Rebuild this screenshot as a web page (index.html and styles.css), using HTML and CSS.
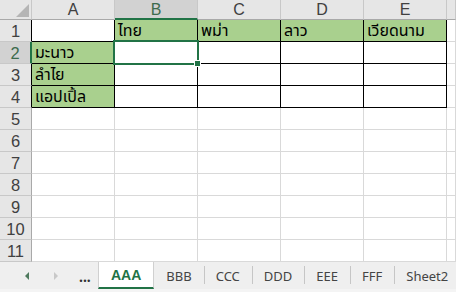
FILE: index.html
```
<!DOCTYPE html>
<html>
<head>
<meta charset="utf-8">
<link rel="stylesheet" href="styles.css">
</head>
<body>
<div class="app">
  <div class="sheet">
    <div class="h corner"><span class="tri"></span></div>
    <div class="h">A</div>
    <div class="h sel-col">B</div>
    <div class="h">C</div>
    <div class="h">D</div>
    <div class="h">E</div>
    <div class="h last"></div>

    <div class="rh rh-bd">1</div>
    <div class="c bd"></div>
    <div class="c bd g">ไทย</div>
    <div class="c bd g">พม่า</div>
    <div class="c bd g">ลาว</div>
    <div class="c bd g">เวียดนาม</div>
    <div class="c"></div>

    <div class="rh rh-bd sel-row">2</div>
    <div class="c bd g">มะนาว</div>
    <div class="c bd active"><span class="selbox"><span class="handle"></span></span></div>
    <div class="c bd"></div>
    <div class="c bd"></div>
    <div class="c bd"></div>
    <div class="c"></div>

    <div class="rh rh-bd">3</div>
    <div class="c bd g">ลำไย</div>
    <div class="c bd"></div>
    <div class="c bd"></div>
    <div class="c bd"></div>
    <div class="c bd"></div>
    <div class="c"></div>

    <div class="rh rh-bd">4</div>
    <div class="c bd g">แอปเปิ้ล</div>
    <div class="c bd"></div>
    <div class="c bd"></div>
    <div class="c bd"></div>
    <div class="c bd"></div>
    <div class="c"></div>

    <div class="rh">5</div><div class="c"></div><div class="c"></div><div class="c"></div><div class="c"></div><div class="c"></div><div class="c"></div>
    <div class="rh">6</div><div class="c"></div><div class="c"></div><div class="c"></div><div class="c"></div><div class="c"></div><div class="c"></div>
    <div class="rh">7</div><div class="c"></div><div class="c"></div><div class="c"></div><div class="c"></div><div class="c"></div><div class="c"></div>
    <div class="rh">8</div><div class="c"></div><div class="c"></div><div class="c"></div><div class="c"></div><div class="c"></div><div class="c"></div>
    <div class="rh">9</div><div class="c"></div><div class="c"></div><div class="c"></div><div class="c"></div><div class="c"></div><div class="c"></div>
    <div class="rh">10</div><div class="c"></div><div class="c"></div><div class="c"></div><div class="c"></div><div class="c"></div><div class="c"></div>
    <div class="rh">11</div><div class="c"></div><div class="c"></div><div class="c"></div><div class="c"></div><div class="c"></div><div class="c"></div>
  </div>

  <div class="tabbar">
    <div class="nav">
      <span class="arrow left"></span>
      <span class="arrow right"></span>
      <span class="dots">...</span>
    </div>
    <div class="tab active-tab">AAA</div>
    <div class="tab">BBB</div>
    <div class="tab">CCC</div>
    <div class="tab">DDD</div>
    <div class="tab">EEE</div>
    <div class="tab">FFF</div>
    <div class="tab">Sheet2</div>
  </div>
</div>
</body>
</html>
```
FILE: styles.css
```
html, body {
  margin: 0;
  padding: 0;
  background: #ffffff;
}
.app {
  width: 456px;
  height: 292px;
  overflow: hidden;
  display: flex;
  flex-direction: column;
}
.sheet {
  display: grid;
  grid-template-columns: 32px repeat(5, 83px) 1fr;
  grid-template-rows: 20px repeat(11, 22px);
  flex: none;
}
.sheet > div {
  box-sizing: border-box;
  border-right: 1px solid #d9d9d9;
  border-bottom: 1px solid #d9d9d9;
  overflow: visible;
  white-space: nowrap;
}
.h {
  background: #e6e6e6;
  border-right-color: #c8c8c8 !important;
  border-bottom-color: #a9a9a9 !important;
  font-family: "Liberation Sans", Arial, sans-serif;
  font-size: 16px;
  color: #404040;
  text-align: center;
  line-height: 19px;
}
.corner {
  position: relative;
}
.tri {
  position: absolute;
  right: 2px;
  bottom: 2px;
  width: 0;
  height: 0;
  border-left: 13px solid transparent;
  border-bottom: 13px solid #b5b5b5;
}
.sel-col {
  background: #d2d2d2;
  color: #3d6b4d;
  border-bottom: 2px solid #217346 !important;
}
.rh {
  background: #e6e6e6;
  border-right-color: #a9a9a9 !important;
  border-bottom-color: #c8c8c8 !important;
  font-family: "Liberation Sans", Arial, sans-serif;
  font-size: 16.5px;
  color: #404040;
  text-align: center;
  line-height: 23px;
}
.rh-bd {
  border-right-color: #000 !important;
}
.sel-row {
  background: #d2d2d2;
  color: #3d6b4d;
  border-right: 2px solid #217346 !important;
}
.c {
  font-family: Tahoma, "Noto Sans Thai", "Leelawadee UI", "Noto Sans", sans-serif;
  font-size: 16px;
  color: #000;
  padding-left: 3px;
  padding-top: 2px;
  line-height: 19px;
}
.bd {
  border-right-color: #000 !important;
  border-bottom-color: #000 !important;
}
.g {
  background: #a9d08e;
}
.active {
  position: relative;
}
.selbox {
  position: absolute;
  left: -2px;
  top: -2px;
  right: -2px;
  bottom: -2px;
  border: 2px solid #217346;
  box-sizing: border-box;
}
.handle {
  position: absolute;
  right: -4px;
  bottom: -4px;
  width: 5px;
  height: 5px;
  background: #217346;
  border: 1px solid #ffffff;
}
.tabbar {
  flex: 1;
  display: flex;
  align-items: stretch;
  background: #efefef;
  border-bottom: 3px solid #f4f4f4;
  box-sizing: border-box;
  font-family: "Noto Sans", "Open Sans", sans-serif;
  font-size: 13px;
  color: #444;
}
.nav {
  width: 98px;
  flex: none;
  display: flex;
  align-items: center;
  position: relative;
}
.arrow {
  width: 0;
  height: 0;
  border-top: 4px solid transparent;
  border-bottom: 4px solid transparent;
}
.arrow.left {
  margin-left: 25px;
  border-right: 4px solid #4f7a5e;
}
.arrow.right {
  margin-left: 25px;
  border-left: 4px solid #c8c8c8;
}
.dots {
  margin-left: 21px;
  font-weight: bold;
  color: #333;
  font-size: 14px;
  padding-top: 2px;
}
.tab {
  display: flex;
  align-items: center;
  padding: 0 12px;
  position: relative;
}
.tab + .tab::before {
  content: "";
  position: absolute;
  left: 0;
  top: 4px;
  bottom: 5px;
  width: 1px;
  background: #c6c6c6;
}
.tab:last-child::after {
  content: "";
  position: absolute;
  right: 0;
  top: 4px;
  bottom: 5px;
  width: 1px;
  background: #c6c6c6;
}
.active-tab {
  background: #ffffff;
  color: #217346;
  font-weight: bold;
  font-family: "Liberation Sans", Arial, sans-serif;
  font-size: 14px;
  border-bottom: 2px solid #217346;
  border-left: 1px solid #d0d0d0;
  border-right: 1px solid #d0d0d0;
  padding: 0 12px;
}
.active-tab + .tab::before {
  display: none;
}
```
